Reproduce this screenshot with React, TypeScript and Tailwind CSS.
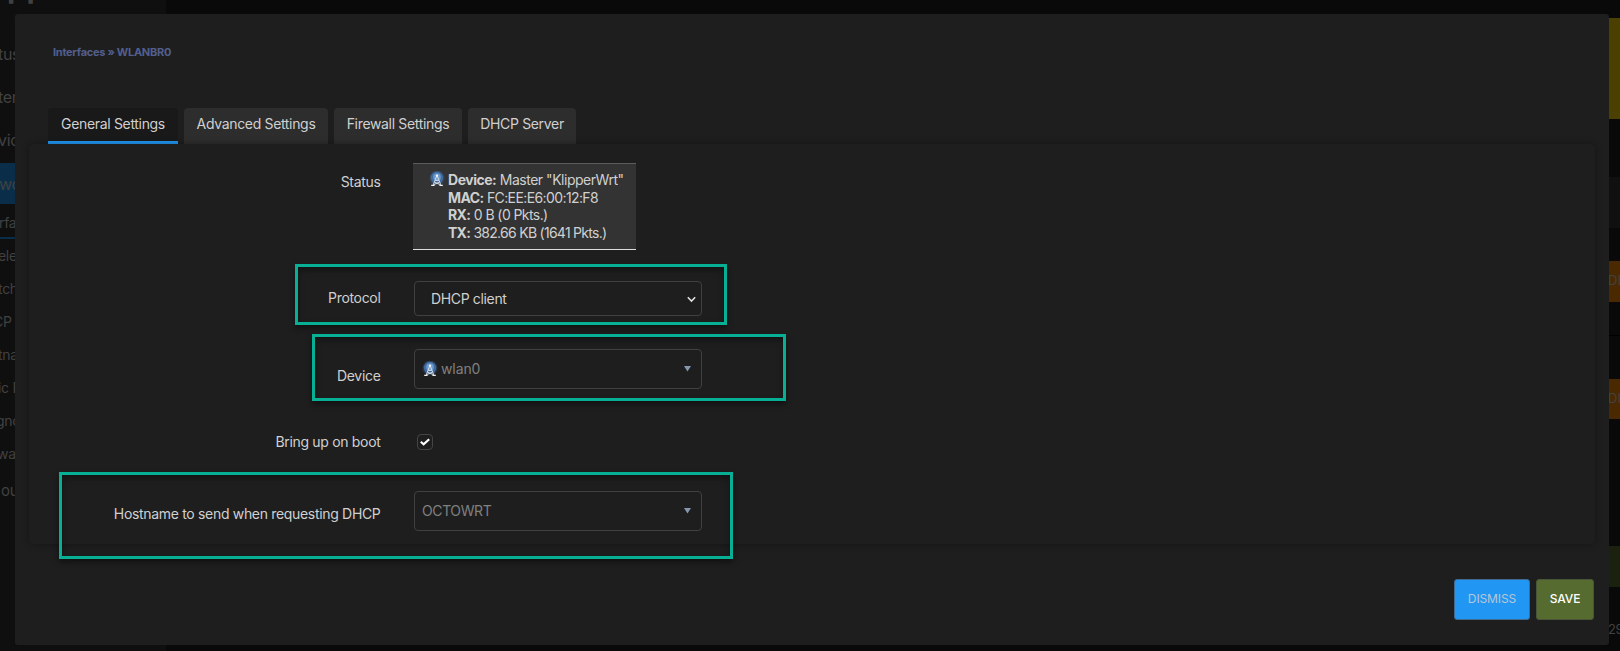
import type { ReactNode } from "react";

const menu = [
  { text: "tus", h: "h-[43px]", x: "-ml-[2px]", size: "text-[16px]" },
  { text: "ter", h: "h-[43px]", x: "-ml-[2px]", size: "text-[16px]" },
  { text: "vic", h: "h-[43px]", x: "-ml-[2px]", size: "text-[16px]" },
  { text: "wo", h: "mt-[2px] h-[41px] bg-[#0a2e4a]", x: "-ml-px", size: "text-[16px]" },
  { text: "rfa", h: "h-[35px] pt-[3px] border-b-2 border-[#0a2e4a]", x: "-ml-px", size: "text-[14px]" },
  { text: "eles", h: "h-[33px]", x: "-ml-[2px]", size: "text-[14px]" },
  { text: "tch", h: "h-[33px]", x: "-ml-[2px]", size: "text-[14px]" },
  { text: "CP", h: "h-[33px]", x: "-ml-[7px]", size: "text-[14px]" },
  { text: "tna", h: "h-[33px]", x: "-ml-[2px]", size: "text-[14px]" },
  { text: "ic R", h: "h-[33px]", x: "-ml-[2px]", size: "text-[14px]" },
  { text: "gno", h: "h-[33px]", x: "-ml-[4px]", size: "text-[14px]" },
  { text: "wa", h: "h-[33px]", x: "-ml-[3px]", size: "text-[14px]" },
  { text: "ou", h: "h-[43px]", x: "pl-px", size: "text-[15px]" },
];

function Sidebar() {
  return (
    <div className="flex h-full w-[166px] shrink-0 flex-col overflow-hidden bg-[#0f0f0f] tracking-[-0.3px] text-[#414141]">
      <div className="flex h-[32px] shrink-0 items-start overflow-hidden pl-[7px]">
        <span className="-mt-[28px] text-[30px] leading-[30px] font-bold tracking-[0.5px]">pp</span>
      </div>
      {menu.map((m) => (
        <div key={m.text} className={`flex shrink-0 items-center whitespace-nowrap ${m.h} ${m.size}`}>
          <span className={m.x}>{m.text}</span>
        </div>
      ))}
    </div>
  );
}

function RightStrip() {
  return (
    <div className="flex h-full w-[12px] shrink-0 flex-col overflow-hidden text-[13px] text-[#414141]">
      <div className="mt-[18px] h-[101px] shrink-0 bg-[#4b4000]" />
      <div className="mt-[58px] h-[51px] shrink-0 bg-[#101010]" />
      <div className="mt-[33px] flex h-[41px] shrink-0 items-center bg-[#4b2900] pb-px">DI</div>
      <div className="mt-[33px] h-px shrink-0 bg-black" />
      <div className="mt-[43px] flex h-[40px] shrink-0 items-center bg-[#4b2900] pb-px">DI</div>
      <div className="mt-[127px] h-[41px] shrink-0 bg-[#1a210e]" />
      <div className="mt-[33px] -ml-[5px] shrink-0 leading-[18px] tracking-[-0.3px]">129</div>
    </div>
  );
}

function WifiMast() {
  return (
    <svg width="16" height="16" viewBox="0 0 16 16" className="shrink-0">
      <circle cx="8" cy="7" r="7.6" fill="#3c6394" opacity="0.35" />
      <circle cx="8" cy="6.8" r="6.2" fill="#4474b0" opacity="0.85" />
      <circle cx="8" cy="6" r="3.8" fill="#6c9bd0" />
      <path d="M7.5 5.5 4.2 14M8.5 5.5l3.3 8.5M6.2 9.4h3.6M5.6 11.2l5.6 2.4M10.4 11.2l-5.6 2.4" stroke="#e4e4e4" strokeWidth="0.9" fill="none" />
      <path d="M2.2 14.4h3.4M10.4 14.4h3.4" stroke="#f0f0f0" strokeWidth="1.1" />
      <circle cx="8" cy="4.8" r="1.2" fill="#f4f4f4" />
    </svg>
  );
}

function Caret() {
  return (
    <svg width="7" height="6" viewBox="0 0 7 6" className="shrink-0">
      <path d="M0 0h7L3.5 5.5z" fill="#8497ae" />
    </svg>
  );
}

function Tab({ label, width, active }: { label: string; width: string; active?: boolean }) {
  return (
    <div
      className={`flex h-[36px] justify-center rounded-t-[4px] pt-[7px] text-[14px] leading-[18px] tracking-[-0.33px] whitespace-nowrap ${width} ${
        active ? "border-b-[3px] border-[#2196f3] bg-[#191919]" : "bg-[#2d2d2d]"
      }`}
    >
      {label}
    </div>
  );
}

function Row({ label, labelPad, className, children }: { label: string; labelPad: string; className: string; children: ReactNode }) {
  return (
    <div className={`flex ${className}`}>
      <div className={`flex w-[352px] shrink-0 justify-end pr-[0.5px] text-[14px] leading-[18px] tracking-[-0.32px] ${labelPad}`}>{label}</div>
      {children}
    </div>
  );
}

const boxShadow = "shadow-[0_3px_6px_rgba(0,0,0,0.45),inset_0_3px_6px_rgba(0,0,0,0.4)]";

export default function App() {
  return (
    <div className="relative h-[651px] w-[1620px] overflow-hidden bg-[#090909] font-['Inter','Liberation_Sans',sans-serif] text-[#d0d0d0]">
      <div className="flex h-full justify-between">
        <Sidebar />
        <RightStrip />
      </div>

      <div className="absolute top-[14px] left-[15px] flex h-[631px] w-[1594px] flex-col rounded-[3px] bg-[#1e1e1e] px-[14px]">
        <div className="mt-[29px] h-[18px] pl-[24px] text-[11px] leading-[18px] font-bold tracking-[-0.27px] text-[#525f8d]">
          Interfaces » WLANBR0
        </div>
        <div className="mt-[47px] flex gap-[6px] pl-[19px]">
          <Tab label="General Settings" width="w-[130px]" active />
          <Tab label="Advanced Settings" width="w-[144px]" />
          <Tab label="Firewall Settings" width="w-[128px]" />
          <Tab label="DHCP Server" width="w-[108px]" />
        </div>
        <div className="flex h-[400px] flex-col rounded-[5px] bg-[#1e1e1e] shadow-[0_0_7px_rgba(0,0,0,0.35)]">
          <Row label="Status" labelPad="pt-[10px]" className="mt-[19px] h-[87px]">
            <div className="ml-[32px] flex w-[223px] gap-[3px] border-t border-b border-t-[#5c5c5c] border-b-[#dddddd] bg-[#333333] pt-[7px] pl-[16px] text-[14px] leading-[17.6px] whitespace-nowrap">
              <WifiMast />
              <div>
                <div className="tracking-[-0.48px]"><b>Device:</b> Master "KlipperWrt"</div>
                <div className="tracking-[-0.6px]"><b>MAC:</b> FC:EE:E6:00:12:F8</div>
                <div className="tracking-[-0.58px]"><b>RX:</b> 0 B (0 Pkts.)</div>
                <div className="tracking-[-0.72px]"><b>TX:</b> 382.66 KB (1641 Pkts.)</div>
              </div>
            </div>
          </Row>
          <Row label="Protocol" labelPad="pt-[8px]" className="mt-[31px] h-[35px]">
            <div className="ml-[33px] flex w-[288px] items-center justify-between rounded-[4px] border border-[#404040] pr-[5px] pb-px pl-[16px] text-[14px] tracking-[-0.35px]">
              DHCP client
              <svg width="9" height="7" viewBox="0 0 9 7" className="relative top-px">
                <path d="M.8 1.2 4.5 5 8.2 1.2" stroke="#e0e0e0" strokeWidth="1.6" fill="none" />
              </svg>
            </div>
          </Row>
          <Row label="Device" labelPad="pt-[18px]" className="mt-[33px] h-[40px]">
            <div className="ml-[33px] flex w-[288px] items-center rounded-[4px] border border-[#404040] pr-[10px] pb-px pl-[7px] text-[14px] tracking-[-0.1px] text-[#808080]">
              <WifiMast />
              <span className="ml-[3px] flex-1">wlan0</span>
              <Caret />
            </div>
          </Row>
          <Row label="Bring up on boot" labelPad="-mt-px" className="mt-[45px] h-[16px]">
            <div className="ml-[36px] flex w-[16px] items-center justify-center rounded-[4px] border border-[#444444]">
              <svg width="10" height="8" viewBox="0 0 10 8">
                <path d="M.8 3.8 3.6 6.3 9.2 1.2" stroke="#ffffff" strokeWidth="2.2" fill="none" />
              </svg>
            </div>
          </Row>
          <Row label="Hostname to send when requesting DHCP" labelPad="pt-[14px]" className="mt-[41px] h-[40px]">
            <div className="ml-[33px] flex w-[288px] items-center justify-between rounded-[4px] border border-[#404040] pr-[10px] pb-px pl-[7px] text-[14px] tracking-[-0.4px] text-[#808080]">
              OCTOWRT
              <Caret />
            </div>
          </Row>
        </div>
        <div className="mt-[35px] flex justify-end gap-[6px] pr-px text-[12px] font-medium">
          <div className="flex h-[41px] w-[76px] items-center justify-center rounded-[3px] border border-[#3f6b91] bg-[#2196f3] pb-[2px] font-normal tracking-[-0.1px] text-[#b9c6d6]">DISMISS</div>
          <div className="flex h-[41px] w-[58px] items-center justify-center rounded-[3px] border border-[#4a5538] bg-[#556b2f] pb-[2px] tracking-[-0.1px] text-white">SAVE</div>
        </div>
      </div>

      <div className={`absolute top-[264px] left-[295px] h-[61px] w-[432px] border-[3px] border-[#07b095] ${boxShadow}`} />
      <div className={`absolute top-[334px] left-[312px] h-[67px] w-[474px] border-[3px] border-[#07b095] ${boxShadow}`} />
      <div className={`absolute top-[472px] left-[59px] h-[87px] w-[674px] border-[3px] border-[#07b095] ${boxShadow}`} />
    </div>
  );
}
